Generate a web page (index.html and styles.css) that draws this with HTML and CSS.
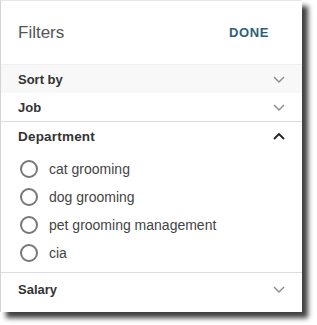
FILE: index.html
```html
<!DOCTYPE html>
<html>
<head>
<meta charset="utf-8">
<link rel="stylesheet" href="styles.css">
</head>
<body>
<div class="panel">
  <div class="header">
    <span class="title">Filters</span>
    <span class="done">DONE</span>
  </div>
  <div class="row hover">
    <span class="label">Sort by</span>
    <svg class="chev" viewBox="0 0 12 7"><path d="M1 1l5 5 5-5" /></svg>
  </div>
  <div class="row">
    <span class="label">Job</span>
    <svg class="chev" viewBox="0 0 12 7"><path d="M1 1l5 5 5-5" /></svg>
  </div>
  <div class="section">
    <div class="row">
      <span class="label">Department</span>
      <svg class="chev up" viewBox="0 0 12 7"><path d="M1 6l5-5 5 5" /></svg>
    </div>
    <ul class="options">
      <li><span class="radio"></span>cat grooming</li>
      <li><span class="radio"></span>dog grooming</li>
      <li><span class="radio"></span>pet grooming management</li>
      <li><span class="radio"></span>cia</li>
    </ul>
  </div>
  <div class="row last">
    <span class="label">Salary</span>
    <svg class="chev" viewBox="0 0 12 7"><path d="M1 1l5 5 5-5" /></svg>
  </div>
</div>
</body>
</html>
```
FILE: styles.css
```css
html, body {
  margin: 0;
  padding: 0;
  background: #fff;
}
body {
  font-family: "Liberation Sans", Arial, sans-serif;
  height: 325px;
}
.panel {
  width: 302px;
  height: 312px;
  box-sizing: border-box;
  border-left: 1px solid #d4d4d4;
  border-top: 1px solid #e6e6e6;
  background: #fff;
  box-shadow: 6px 6px 5px rgba(0, 0, 0, 0.75);
  display: flex;
  flex-direction: column;
}
.header {
  height: 63px;
  display: flex;
  align-items: center;
  justify-content: space-between;
  padding: 0 33px 0 17px;
  border-bottom: 1px solid #efefef;
  box-sizing: content-box;
}
.title {
  font-size: 17px;
  color: #555;
}
.done {
  font-size: 13px;
  font-weight: bold;
  color: #2e5f78;
  letter-spacing: 0.6px;
}
.row {
  height: 28px;
  display: flex;
  align-items: center;
  justify-content: space-between;
  padding: 0 17px 0 17px;
}
.hover {
  background: #f8f8f8;
}
.label {
  font-size: 13px;
  font-weight: bold;
  color: #333;
}
.section .label {
  font-size: 13.5px;
  letter-spacing: 0.2px;
}
.chev {
  width: 12px;
  height: 7px;
  fill: none;
  stroke: #8a8a8a;
  stroke-width: 1.4;
}
.chev.up {
  stroke: #222;
  stroke-width: 1.8;
}
.section {
  border-top: 1px solid #dcdcdc;
  border-bottom: 1px solid #dcdcdc;
  padding-bottom: 5px;
}
.section .row {
  height: 29px;
}
.options {
  list-style: none;
  margin: 4px 0 0;
  padding: 0 0 0 19px;
}
.options li {
  height: 28px;
  display: flex;
  align-items: center;
  font-size: 14px;
  color: #444;
}
.radio {
  width: 14px;
  height: 14px;
  border: 2px solid #777;
  border-radius: 50%;
  margin-right: 11px;
  flex: none;
}
.last {
  height: 33px;
}
```
